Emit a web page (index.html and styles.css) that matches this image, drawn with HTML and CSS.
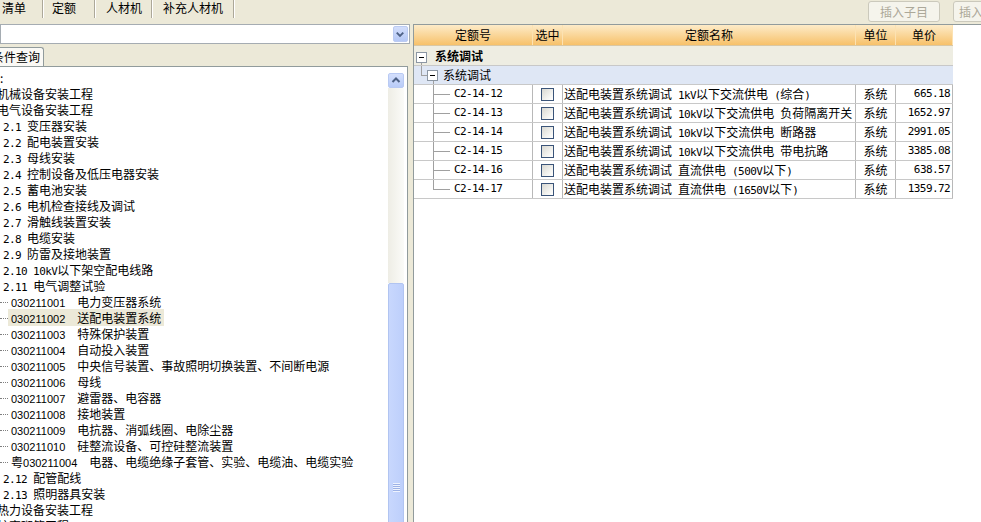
FILE: index.html
```html
<!DOCTYPE html>
<html lang="zh-CN">
<head>
<meta charset="utf-8">
<title>定额查询</title>
<link rel="stylesheet" href="styles.css">
</head>
<body>
<div class="app">
  <div class="topbar">
    <div class="tabs">
      <div class="tab t1">清单</div>
      <div class="tab t2">定额</div>
      <div class="tab t3">人材机</div>
      <div class="tab t4">补充人材机</div>
    </div>
    <div class="btns">
      <button class="btn b1">插入子目</button>
      <button class="btn b2">插入</button>
    </div>
  </div>
  <div class="main">
    <div class="left">
      <div class="combo">
        <div class="combo-btn"><svg width="15" height="16" viewBox="0 0 15 16"><path d="M4 6.5 L7.5 10 L11 6.5" fill="none" stroke="#4D6185" stroke-width="2"/></svg></div>
      </div>
      <div class="subtabs"><div class="subtab">条件查询</div></div>
      <div class="treepanel">
        <div class="tree">
          <div class="node l1 colon">:</div>
          <div class="node l1">机械设备安装工程</div>
          <div class="node l1">电气设备安装工程</div>
          <div class="node l2"><span class="a">2.1 </span>变压器安装</div>
          <div class="node l2"><span class="a">2.2 </span>配电装置安装</div>
          <div class="node l2"><span class="a">2.3 </span>母线安装</div>
          <div class="node l2"><span class="a">2.4 </span>控制设备及低压电器安装</div>
          <div class="node l2"><span class="a">2.5 </span>蓄电池安装</div>
          <div class="node l2"><span class="a">2.6 </span>电机检查接线及调试</div>
          <div class="node l2"><span class="a">2.7 </span>滑触线装置安装</div>
          <div class="node l2"><span class="a">2.8 </span>电缆安装</div>
          <div class="node l2"><span class="a">2.9 </span>防雷及接地装置</div>
          <div class="node l2"><span class="a">2.10 10kV</span>以下架空配电线路</div>
          <div class="node l2"><span class="a">2.11 </span>电气调整试验</div>
          <div class="node l3"><span class="dots"></span><span class="lbl"><span class="code">030211001</span>电力变压器系统</span></div>
          <div class="node l3 sel"><span class="dots"></span><span class="lbl"><span class="code">030211002</span>送配电装置系统</span></div>
          <div class="node l3"><span class="dots"></span><span class="lbl"><span class="code">030211003</span>特殊保护装置</span></div>
          <div class="node l3"><span class="dots"></span><span class="lbl"><span class="code">030211004</span>自动投入装置</span></div>
          <div class="node l3"><span class="dots"></span><span class="lbl"><span class="code">030211005</span>中央信号装置、事故照明切换装置、不间断电源</span></div>
          <div class="node l3"><span class="dots"></span><span class="lbl"><span class="code">030211006</span>母线</span></div>
          <div class="node l3"><span class="dots"></span><span class="lbl"><span class="code">030211007</span>避雷器、电容器</span></div>
          <div class="node l3"><span class="dots"></span><span class="lbl"><span class="code">030211008</span>接地装置</span></div>
          <div class="node l3"><span class="dots"></span><span class="lbl"><span class="code">030211009</span>电抗器、消弧线圈、电除尘器</span></div>
          <div class="node l3"><span class="dots"></span><span class="lbl"><span class="code">030211010</span>硅整流设备、可控硅整流装置</span></div>
          <div class="node l3"><span class="dots"></span><span class="lbl">粤<span class="code">030211004</span>电器、电缆绝缘子套管、实验、电缆油、电缆实验</span></div>
          <div class="node l2"><span class="a">2.12 </span>配管配线</div>
          <div class="node l2"><span class="a">2.13 </span>照明器具安装</div>
          <div class="node l1">热力设备安装工程</div>
          <div class="node l1">炉窑砌筑工程</div>
        </div>
        <div class="vscroll">
          <div class="sb-up"><svg width="14" height="13" viewBox="0 0 14 13"><path d="M3.5 8 L7 4.5 L10.5 8" fill="none" stroke="#4D6185" stroke-width="2"/></svg></div>
          <div class="sb-track"></div>
          <div class="sb-thumb"><span class="grip"></span></div>
        </div>
      </div>
    </div>
    <div class="right">
      <div class="grid">
        <div class="row hrow">
          <div class="hc">定额号</div>
          <div class="hc">选中</div>
          <div class="hc">定额名称</div>
          <div class="hc">单位</div>
          <div class="hc">单价</div>
        </div>
        <div class="row g1"><span class="mbox"></span><b>系统调试</b></div>
        <div class="row g2"><span class="mbox"></span>系统调试</div>
        <div class="row drow">
          <div class="c code-c a">C2-14-12</div>
          <div class="c chk-c"><span class="chk"></span></div>
          <div class="c name-c">送配电装置系统调试<span class="a"> 1kV</span>以下交流供电<span class="a"> (</span>综合<span class="a">)</span></div>
          <div class="c unit-c">系统</div>
          <div class="c price-c a">665.18</div>
        </div>
        <div class="row drow">
          <div class="c code-c a">C2-14-13</div>
          <div class="c chk-c"><span class="chk"></span></div>
          <div class="c name-c">送配电装置系统调试<span class="a"> 10kV</span>以下交流供电<span class="a"> </span>负荷隔离开关</div>
          <div class="c unit-c">系统</div>
          <div class="c price-c a">1652.97</div>
        </div>
        <div class="row drow">
          <div class="c code-c a">C2-14-14</div>
          <div class="c chk-c"><span class="chk"></span></div>
          <div class="c name-c">送配电装置系统调试<span class="a"> 10kV</span>以下交流供电<span class="a"> </span>断路器</div>
          <div class="c unit-c">系统</div>
          <div class="c price-c a">2991.05</div>
        </div>
        <div class="row drow">
          <div class="c code-c a">C2-14-15</div>
          <div class="c chk-c"><span class="chk"></span></div>
          <div class="c name-c">送配电装置系统调试<span class="a"> 10kV</span>以下交流供电<span class="a"> </span>带电抗路</div>
          <div class="c unit-c">系统</div>
          <div class="c price-c a">3385.08</div>
        </div>
        <div class="row drow">
          <div class="c code-c a">C2-14-16</div>
          <div class="c chk-c"><span class="chk"></span></div>
          <div class="c name-c">送配电装置系统调试<span class="a"> </span>直流供电<span class="a"> (500V</span>以下<span class="a">)</span></div>
          <div class="c unit-c">系统</div>
          <div class="c price-c a">638.57</div>
        </div>
        <div class="row drow last">
          <div class="c code-c a">C2-14-17</div>
          <div class="c chk-c"><span class="chk"></span></div>
          <div class="c name-c">送配电装置系统调试<span class="a"> </span>直流供电<span class="a"> (1650V</span>以下<span class="a">)</span></div>
          <div class="c unit-c">系统</div>
          <div class="c price-c a">1359.72</div>
        </div>
      </div>
    </div>
  </div>
</div>
</body>
</html>
```

FILE: styles.css
```css
* { box-sizing: border-box; }
html, body { margin: 0; padding: 0; }
body {
  background: #ECE9D8;
  font: 12px/16px "Noto Sans CJK SC", sans-serif;
  color: #000;
  overflow: hidden;
}
.app {
  width: 981px;
  height: 522px;
  overflow: hidden;
  display: flex;
  flex-direction: column;
}
.a {
  font-family: "DejaVu Sans Mono", monospace;
  font-size: 11px;
  letter-spacing: -0.6px;
}

/* top bar */
.topbar { height: 24px; display: flex; align-items: flex-start; flex: none; }
.tabs { display: flex; height: 18px; }
.tab {
  height: 18px;
  line-height: 15px;
  border-right: 1px solid #ACA899;
  box-shadow: 1px 0 0 #fff;
  white-space: nowrap;
}
.t1 { width: 43px; padding-left: 2px; }
.t2 { width: 52px; padding-left: 9px; }
.t3 { width: 57px; padding-left: 11px; }
.t4 { width: 82px; padding-left: 11px; }
.btns { margin-left: auto; margin-right: -8px; display: flex; gap: 13px; padding-top: 1px; }
.btn {
  height: 21px;
  border: 1px solid #CBC9BC;
  border-radius: 3px;
  background: #F5F4EC;
  color: #ACA899;
  font: 12px/19px "Noto Sans CJK SC", sans-serif;
  padding: 0;
  text-align: center;
}
.b1 { width: 72px; }
.b2 { width: 36px; }

/* main */
.main { flex: 1; display: flex; gap: 3px; min-height: 0; }
.left { width: 410px; flex: none; display: flex; flex-direction: column; }
.combo {
  height: 20px;
  flex: none;
  border: 1px solid #A5ACB2;
  background: #fff;
  display: flex;
  justify-content: flex-end;
  padding: 1px 1px 1px 0;
}
.combo-btn {
  width: 15px;
  height: 16px;
  border: 1px solid #BBCBF2;
  border-radius: 2px;
  background: linear-gradient(#D3DEFB, #B5C8F6);
  display: flex;
}
.combo-btn svg { margin: -1px 0 0 -1px; }
.subtabs { height: 19px; margin-top: 3px; display: flex; flex: none; }
.subtab {
  margin-left: -12px;
  width: 56px;
  padding-left: 3px;
  border: 1px solid #919B9C;
  border-bottom: none;
  border-radius: 0 3px 0 0;
  background: #FAF9F5;
  line-height: 17px;
  white-space: nowrap;
}
.treepanel {
  flex: 1;
  width: 408px;
  min-height: 0;
  border: 1px solid #919B9C;
  border-left: none;
  border-bottom: none;
  background: #fff;
  display: flex;
  overflow: hidden;
}
.tree { flex: 1; padding-top: 3px; overflow: hidden; }
.node { height: 16px; line-height: 16px; white-space: nowrap; }
.l1 { margin-left: -3px; }
.colon { margin-left: 0; }
.l2 { padding-left: 3px; }
.dots {
  display: inline-block;
  width: 8px;
  height: 9px;
  vertical-align: top;
  border-bottom: 1px dotted #7F7F7F;
}
.lbl { padding: 0 3px; }
.sel .lbl { background: #ECE9D8; }
.code {
  font-family: "Liberation Sans", sans-serif;
  font-size: 11px;
  margin-right: 12px;
}

/* tree scrollbar */
.vscroll {
  width: 16px;
  margin: 6px 3px 0 0;
  display: flex;
  flex-direction: column;
  flex: none;
  overflow: hidden;
}
.sb-up {
  height: 15px;
  flex: none;
  border: 1px solid #B9CAF3;
  border-radius: 2px;
  background: linear-gradient(#D4DFFC, #B9CCF8);
  display: flex;
  justify-content: center;
  align-items: center;
}
.sb-track {
  height: 195px;
  flex: none;
  background: linear-gradient(90deg, #EEEDE5, #FBFBF8);
}
.sb-thumb {
  height: 420px;
  flex: none;
  border: 1px solid #B1C4F1;
  border-radius: 2px;
  background: linear-gradient(90deg, #C8D7FD, #BDCFFB);
  display: flex;
  justify-content: center;
  align-items: flex-start;
  padding-top: 199px;
}
.grip {
  width: 7px;
  height: 9px;
  background: repeating-linear-gradient(#EEF3FE 0 1px, #9DB2E6 1px 2px);
}

/* right grid */
.right {
  flex: 1;
  border: 1px solid #919B9C;
  border-right: none;
  border-bottom: none;
  background: #fff;
}
.grid { width: 539px; }
.row {
  display: grid;
  grid-template-columns: 119px 30px 293px 40px 57px;
  height: 19px;
  border-bottom: 1px solid #C8C8C8;
}
.hrow {
  height: 21px;
  background: linear-gradient(#FDEBC8, #F7C16A);
  border-bottom: 1px solid #D9C7A4;
}
.hc {
  text-align: center;
  line-height: 20px;
  border-right: 1px solid #FCE2B2;
}
.g1, .g2 { display: flex; align-items: flex-start; }
.g1 {
  height: 20px;
  background:
    linear-gradient(#A0A0A0, #A0A0A0) 7px 17px / 1px 2px no-repeat,
    #EEEDE2;
  line-height: 19px;
}
.g1 .mbox { margin: 6px 8px 0 2px; }
.g2 {
  background:
    linear-gradient(#A0A0A0, #A0A0A0) 7px 0 / 1px 9px no-repeat,
    linear-gradient(#A0A0A0, #A0A0A0) 7px 9px / 6px 1px no-repeat,
    linear-gradient(#A0A0A0, #A0A0A0) 19px 15px / 1px 3px no-repeat,
    #DFE7F5;
  line-height: 18px;
}
.g2 .mbox { margin: 4px 5px 0 13px; }
.mbox {
  width: 11px;
  height: 11px;
  flex: none;
  border: 1px solid #8C97A4;
  display: inline-block;
  background: linear-gradient(#000, #000) 2px 4px / 5px 1px no-repeat, #fff;
}
.c {
  border-right: 1px solid #B8B8B8;
  line-height: 18px;
  white-space: nowrap;
  overflow: hidden;
}
.code-c {
  padding-left: 40px;
  background:
    linear-gradient(#A0A0A0, #A0A0A0) 19px 0 / 1px 100% no-repeat,
    linear-gradient(#A0A0A0, #A0A0A0) 19px 9px / 17px 1px no-repeat;
}
.last .code-c {
  background:
    linear-gradient(#A0A0A0, #A0A0A0) 19px 0 / 1px 10px no-repeat,
    linear-gradient(#A0A0A0, #A0A0A0) 19px 9px / 17px 1px no-repeat;
}
.chk-c { display: flex; justify-content: center; align-items: center; }
.chk {
  width: 13px;
  height: 13px;
  border: 1px solid #3A5479;
  background: linear-gradient(135deg, #D8D8D2, #F6F6F3 70%, #fff);
}
.name-c { padding-left: 1px; }
.unit-c { text-align: center; }
.price-c { text-align: right; padding-right: 2px; }
```
